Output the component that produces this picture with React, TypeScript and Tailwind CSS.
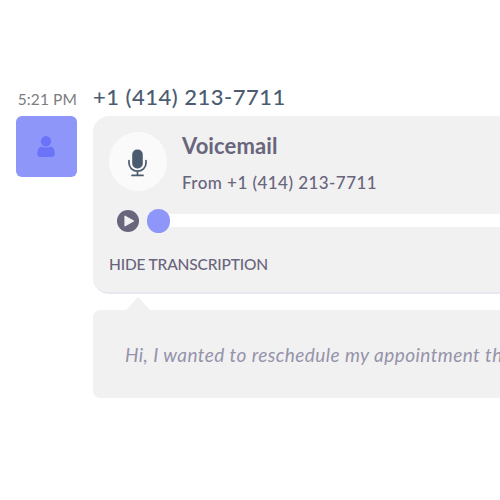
const number = "+1 (414) 213-7711";

function Person() {
  return (
    <svg width="18" height="22" viewBox="0 0 18 22" className="mt-5 mr-px fill-[#6b74f8]">
      <circle cx="9" cy="5.200" r="5.200" />
      <path d="M3.700 10.500C1.300 11.600.3 14.600.3 17.800.3 20 1.500 21 3.700 21h10.600c2.200 0 3.400-1 3.400-3.200 0-3.200-1-6.200-3.400-7.300C12.900 11.300 11.200 11.500 9 11.500S5.100 11.300 3.700 10.500Z" />
    </svg>
  );
}

function Microphone() {
  return (
    <svg width="19" height="28" viewBox="0 0 19 28" className="mt-0.5 mr-0.5 fill-none stroke-[#4c5c70]">
      <rect x="4.200" y="0.500" width="10.600" height="19" rx="5" className="fill-[#4c5c70] stroke-none" />
      <path d="M1 11.500v2.500a8.500 8.200 0 0 0 17 0v-2.500M9.500 22.500v4M4 26.400h11" strokeWidth="1.700" strokeLinecap="round" />
    </svg>
  );
}

function Play() {
  return (
    <svg width="22" height="22" viewBox="0 0 22 22">
      <circle cx="11" cy="11" r="11" className="fill-[#68657c]" />
      <path d="M8 6.200v9.600l8.500-4.800Z" strokeWidth="1.200" strokeLinejoin="round" className="fill-[#f1f1f1] stroke-[#f1f1f1]" />
    </svg>
  );
}

export default function App() {
  return (
    <main className="flex h-[500px] w-[500px] gap-4 overflow-hidden bg-white pt-[78px] pl-4 font-['Lato',sans-serif] whitespace-nowrap">
      <div className="flex w-[61px] shrink-0 flex-col">
        <div className="flex h-[38px] items-center justify-end pt-1.5 text-[15.5px] tracking-[0.1px] text-[#7d7d7d]">
          5:21 PM
        </div>
        <div className="flex h-[61px] justify-center rounded-[6px] bg-[#8e96fa]">
          <Person />
        </div>
      </div>
      <div className="w-[420px] shrink-0">
        <h1 className="flex h-[38px] items-center pb-0.5 text-[22px] font-medium tracking-[0.5px] text-[#4c5c70]">{number}</h1>
        <section className="h-[178px] rounded-2xl border-b-2 border-[#e8e8f0] bg-[#f1f1f1] pt-4 pl-4">
          <div className="flex h-[59px] gap-[15px]">
            <div className="flex h-[59px] w-[58px] items-center justify-center rounded-full bg-[#fafafa]">
              <Microphone />
            </div>
            <div className="text-[#68657c]">
              <h2 className="h-[38px] text-[22px] leading-[27px] font-bold tracking-[0.1px]">Voicemail</h2>
              <p className="text-[17px] leading-[26px] font-medium tracking-[0.45px]">From {number}</p>
            </div>
          </div>
          <div className="mt-[18px] flex h-6 items-center pl-2">
            <Play />
            <div className="z-10 ml-2 h-6 w-[23px] shrink-0 rounded-full bg-[#8e96fa]" />
            <div className="mb-0.5 -ml-3 h-[13px] grow bg-white" />
          </div>
          <div className="mt-[19px] text-[15.5px] leading-6 font-medium tracking-[-0.17px] text-[#68657c]">HIDE TRANSCRIPTION</div>
        </section>
        <svg width="24" height="13" viewBox="0 0 24 13" className="mt-[3px] ml-[33px] block fill-[#f1f1f1]">
          <path d="M0 13 12 0l12 13Z" />
        </svg>
        <section className="flex h-[88px] items-center rounded-[7px] bg-[#f1f1f1] pt-0.5 pl-8 text-[19px] tracking-[0.43px] text-[#9593aa] italic">
          Hi, I wanted to reschedule my appointment this
        </section>
      </div>
    </main>
  );
}
